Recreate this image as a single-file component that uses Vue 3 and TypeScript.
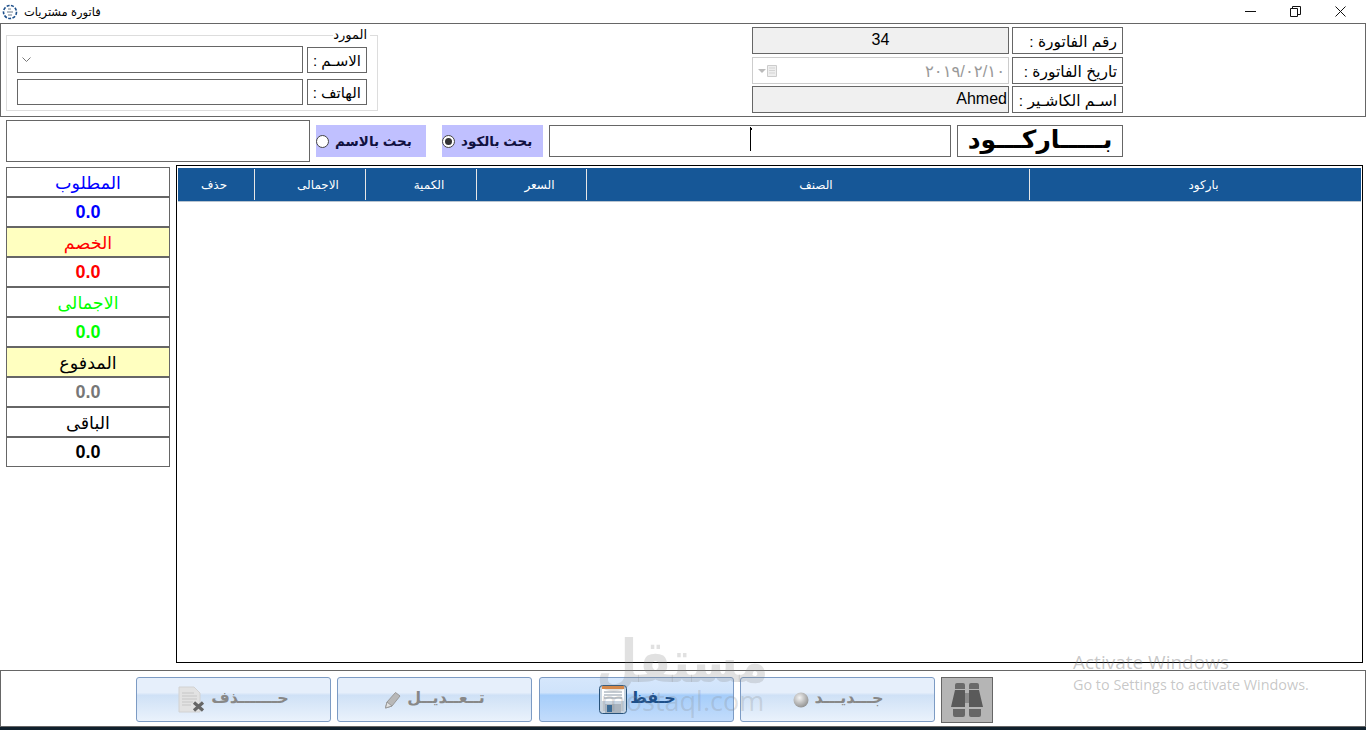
<template>
  <div class="window" dir="ltr">
    <header class="titlebar">
      <svg class="app-icon" width="16" height="16" viewBox="0 0 16 16">
        <circle cx="8" cy="8" r="6.5" fill="none" stroke="#1d4f8a" stroke-width="1.6" stroke-dasharray="3 1.4" />
        <path d="M6 5h3M5 8h6M6 11h4" stroke="#6b7a8c" stroke-width="1" fill="none" />
      </svg>
      <span class="app-title">فاتورة مشتريات</span>
      <div class="win-buttons">
        <svg width="11" height="11" viewBox="0 0 11 11"><path d="M0 5.500h11" stroke="#111" /></svg>
        <svg width="11" height="11" viewBox="0 0 11 11"><path d="M.5 2.500h7v8h-7zM2.500 2.500v-2h8v8h-3" fill="none" stroke="#111" /></svg>
        <svg width="11" height="11" viewBox="0 0 11 11"><path d="M.5.500l10 10M10.500.500l-10 10" fill="none" stroke="#111" /></svg>
      </div>
    </header>

    <section class="top-frame">
      <fieldset class="supplier">
        <legend>المورد</legend>
        <div class="sup-row">
          <div class="box sup-input combo">
            <svg width="9" height="6" viewBox="0 0 9 6"><path d="M.5.500l4 4 4-4" fill="none" stroke="#777" /></svg>
          </div>
          <div class="box sup-label">الاسـم :</div>
        </div>
        <div class="sup-row short">
          <div class="box sup-input"></div>
          <div class="box sup-label">الهاتف :</div>
        </div>
      </fieldset>

      <div class="invoice">
        <div class="inv-row">
          <div class="box inv-value readonly center">34</div>
          <div class="box inv-label">رقم الفاتورة :</div>
        </div>
        <div class="inv-row">
          <div class="box inv-value date">
            <span class="date-btn">
              <i class="tri"></i>
              <svg width="10" height="13" viewBox="0 0 10 13"><path d="M.5 1.500h9v11h-9z" fill="#eee" stroke="#ccc" /><path d="M2 4h6M2 6.500h6M2 9h6" stroke="#d4d4d4" /></svg>
            </span>
            <span class="date-text">٢٠١٩/٠٢/١٠</span>
          </div>
          <div class="box inv-label">تاريخ الفاتورة :</div>
        </div>
        <div class="inv-row">
          <div class="box inv-value readonly end">Ahmed</div>
          <div class="box inv-label">اسـم الكاشـير :</div>
        </div>
      </div>
    </section>

    <section class="search-row">
      <div class="box result-box"></div>
      <label class="radio-tag by-name"><i class="radio"></i><span>بحث بالاسم</span></label>
      <label class="radio-tag by-code"><i class="radio on"></i><span>بحث بالكود</span></label>
      <div class="box search-input"><i class="caret"></i></div>
      <div class="box barcode-label">بـــــاركـــود</div>
    </section>

    <main class="content">
      <aside class="totals">
        <div
          v-for="(c, i) in cells"
          :key="i"
          class="cell"
          :class="{ yellow: c.yellow, num: c.num }"
          :style="{ color: c.color }"
        >{{ c.text }}</div>
      </aside>
      <div class="grid-frame">
        <div class="grid-head">
          <div v-for="h in headers" :key="h" class="head-cell">{{ h }}</div>
        </div>
      </div>
    </main>

    <footer class="actions">
      <button class="act">
        <svg width="28" height="28" viewBox="0 0 28 28">
          <path d="M1 1h15l6 6v19H1z" fill="#e2e2e2" stroke="#d2d2d2" />
          <path d="M4 7h12M4 10h15M4 13h15M4 16h11M4 19h9" stroke="#c6c6c6" />
          <path d="M16 16.500l9 8M25 16.500l-9 8" stroke="#666" stroke-width="3.200" />
        </svg>
        <span>حـــــــذف</span>
      </button>
      <button class="act">
        <svg width="18" height="20" viewBox="0 0 18 20">
          <path d="M1.500 18l1.500-6L11.500 2.500l4.500 3.500-8 10z" fill="#b8b8b8" stroke="#999" />
          <path d="M1.500 18l1.500-6 5 4z" fill="#e2e2e2" stroke="#999" />
        </svg>
        <span>تــعــديــل</span>
      </button>
      <button class="act hot">
        <svg width="28" height="29" viewBox="0 0 28 29">
          <rect x=".5" y=".5" width="27" height="28" rx="3" fill="#c8d4e0" stroke="#27527a" />
          <rect x="3" y="1" width="22" height="15" fill="#fff" />
          <rect x="3" y="1" width="22" height="3" fill="#ee8a3a" />
          <path d="M5 7h18M5 10h18M5 13h18" stroke="#8a97a5" />
          <rect x="6" y="19" width="16" height="9" fill="#aab4be" />
          <rect x="8" y="20" width="5" height="7" fill="#3a6b96" />
        </svg>
        <span>حـفظ</span>
      </button>
      <button class="act">
        <svg width="18" height="18" viewBox="0 0 18 18">
          <defs>
            <radialGradient id="ball" cx=".4" cy=".35" r=".7">
              <stop offset="0" stop-color="#f4f4f4" />
              <stop offset="1" stop-color="#8c8c8c" />
            </radialGradient>
          </defs>
          <circle cx="9" cy="9" r="7.500" fill="url(#ball)" />
        </svg>
        <span>جـــديـــد</span>
      </button>
      <div class="finder">
        <svg width="32" height="34" viewBox="0 0 32 34">
          <path d="M6 0h6a2 2 0 0 1 2 2v4H4V2a2 2 0 0 1 2-2zM20 0h6a2 2 0 0 1 2 2v4H18V2a2 2 0 0 1 2-2z" fill="#6a6a6a" />
          <path d="M4 7h10v17H0zM18 7h10l4 17H18z" fill="#5a5a5a" />
          <path d="M2 26h12v6a2 2 0 0 1-2 2H4a2 2 0 0 1-2-2zM18 26h12v6a2 2 0 0 1-2 2h-8a2 2 0 0 1-2-2z" fill="#666" />
          <path d="M14 10h4v10h-4z" fill="#8c8c8c" />
        </svg>
      </div>
    </footer>
    <div class="taskbar"></div>

    <div class="watermark">
      <span class="wm-ar">مستقل</span>
      <span class="wm-en">mostaql.com</span>
    </div>
    <div class="activate">
      <div class="act-1">Activate Windows</div>
      <div class="act-2">Go to Settings to activate Windows.</div>
    </div>
  </div>
</template>

<script setup lang="ts">
interface Cell {
  text: string;
  color: string;
  yellow?: boolean;
  num?: boolean;
}

const cells: Cell[] = [
  { text: 'المطلوب', color: '#0000ff' },
  { text: '0.0', color: '#0000ff', num: true },
  { text: 'الخصم', color: '#ff0000', yellow: true },
  { text: '0.0', color: '#ff0000', num: true },
  { text: 'الاجمالى', color: '#00ff00' },
  { text: '0.0', color: '#00ff00', num: true },
  { text: 'المدفوع', color: '#000', yellow: true },
  { text: '0.0', color: '#777', num: true },
  { text: 'الباقى', color: '#000' },
  { text: '0.0', color: '#000', num: true }
];

const headers = ['حذف', 'الاجمالى', 'الكمية', 'السعر', 'الصنف', 'باركود'];
</script>

<style>
html,
body {
  margin: 0;
  background: #fff;
  overflow: hidden;
}
</style>

<style scoped>
.window {
  position: relative;
  width: 1366px;
  height: 730px;
  display: flex;
  flex-direction: column;
  background: #fff;
  font-family: "Liberation Sans", "DejaVu Sans", sans-serif;
  color: #000;
  overflow: hidden;
}
.box {
  box-sizing: border-box;
  border: 1px solid #666;
  background: #fff;
}

/* title bar */
.titlebar {
  height: 23px;
  flex: none;
  display: flex;
  align-items: center;
  padding-left: 2px;
}
.app-icon {
  margin-right: 6px;
}
.app-title {
  font-size: 11.500px;
}
.win-buttons {
  margin-left: auto;
  display: flex;
  gap: 34px;
  padding-right: 20px;
}

/* invoice + supplier */
.top-frame {
  box-sizing: border-box;
  height: 94px;
  flex: none;
  border: 1px solid #666;
  display: flex;
  justify-content: space-between;
  padding: 3px 242px 0 5px;
}
.supplier {
  box-sizing: border-box;
  width: 372px;
  height: 84px;
  margin: 0;
  padding: 0 10px;
  border: 1px solid #ddd;
}
.supplier legend {
  margin-left: auto;
  margin-right: -3px;
  padding: 0 3px 0 0;
  font-size: 13px;
  line-height: 16px;
}
.sup-row {
  display: flex;
  gap: 4px;
  height: 27px;
  margin-top: 3px;
  margin-bottom: 6px;
  align-items: flex-end;
}
.sup-row.short {
  height: 26px;
  margin-top: 0;
  margin-bottom: 0;
}
.sup-input {
  width: 286px;
  height: 100%;
}
.combo {
  display: flex;
  align-items: center;
  padding-left: 4px;
}
.sup-label {
  width: 60px;
  height: 26px;
  direction: rtl;
  font-size: 15px;
  line-height: 25px;
  padding-right: 5px;
}
.invoice {
  display: flex;
  flex-direction: column;
  gap: 2px;
}
.inv-row {
  display: flex;
  gap: 3px;
  height: 27px;
}
.inv-row:first-child {
  margin-bottom: 1px;
}
.inv-value {
  width: 257px;
  font-size: 16px;
  line-height: 24px;
}
.readonly {
  background: #f0f0f0;
}
.center {
  text-align: center;
}
.end {
  text-align: right;
  padding-right: 1px;
}
.date {
  display: flex;
  justify-content: space-between;
  align-items: center;
  border-color: #ccc;
  color: #999;
  padding: 0 3px 0 5px;
}
.date-btn {
  display: flex;
  align-items: center;
  gap: 1px;
}
.tri {
  width: 0;
  height: 0;
  border: 4px solid transparent;
  border-top-color: #bbb;
  border-bottom: 0;
}
.date-text {
  font-size: 16.500px;
}
.inv-label {
  width: 111px;
  direction: rtl;
  font-size: 15.500px;
  line-height: 27px;
  padding-right: 5px;
}

/* search */
.search-row {
  height: 42px;
  flex: none;
  margin-top: 3px;
  display: flex;
  align-items: center;
  padding-left: 6px;
}
.result-box {
  width: 304px;
  height: 42px;
  margin-right: 6px;
}
.radio-tag {
  height: 32px;
  box-sizing: border-box;
  background: #c0c0ff;
  display: flex;
  align-items: center;
  font-size: 13.500px;
  font-weight: 700;
  color: #101040;
  gap: 6px;
}
.by-name {
  width: 110px;
  margin-right: 16px;
}
.by-code {
  width: 101px;
  margin-right: 6px;
}
.radio {
  box-sizing: border-box;
  width: 13px;
  height: 13px;
  border-radius: 50%;
  border: 1px solid #444;
  background: #fff;
  position: relative;
}
.radio.on::after {
  content: "";
  position: absolute;
  inset: 2px;
  border-radius: 50%;
  background: #333;
}
.search-input {
  width: 402px;
  height: 32px;
  margin-right: 6px;
  position: relative;
}
.caret {
  position: absolute;
  left: 200px;
  top: 1px;
  width: 1px;
  height: 24px;
  background: #000;
}
.caret::before {
  content: "";
  position: absolute;
  left: 1px;
  top: 1px;
  width: 1px;
  height: 2px;
  background: #000;
}
.barcode-label {
  width: 166px;
  height: 32px;
  direction: rtl;
  text-align: center;
  font-size: 25px;
  font-weight: 700;
  line-height: 26px;
}

/* totals + grid */
.content {
  flex: none;
  height: 498px;
  margin-top: 3px;
  display: flex;
  gap: 6px;
  padding-left: 6px;
}
.totals {
  box-sizing: border-box;
  width: 164px;
  height: 300px;
  margin-top: 2px;
  border: 1px solid #666;
  display: flex;
  flex-direction: column;
}
.cell {
  box-sizing: border-box;
  height: 30px;
  flex: none;
  border-bottom: 2px solid #666;
  text-align: center;
  direction: rtl;
  font-size: 17.500px;
  line-height: 31px;
}
.cell:last-child {
  border-bottom: 0;
}
.cell.yellow {
  background: #ffffc0;
}
.cell.num {
  font-size: 18px;
  font-weight: 700;
  line-height: 28px;
}
.grid-frame {
  box-sizing: border-box;
  width: 1187px;
  border: 1px solid #000;
  padding: 2px 1px 0;
}
.grid-head {
  display: grid;
  grid-template-columns: 76px 111px 111px 110px 443px 332px;
  height: 33px;
  background: #165797;
  border-bottom: 1px solid #b8c4d0;
}
.head-cell {
  color: #fff;
  font-size: 12px;
  line-height: 35px;
  height: 33px;
  text-align: center;
  direction: rtl;
  position: relative;
}
.head-cell + .head-cell {
  padding-left: 17px;
}
.head-cell:first-child {
  padding-right: 4px;
}
.head-cell + .head-cell::before {
  content: "";
  position: absolute;
  left: 0;
  top: 1px;
  bottom: 1px;
  width: 1px;
  background: #e6e6e6;
}

/* bottom buttons */
.actions {
  box-sizing: border-box;
  height: 57px;
  flex: none;
  margin-top: 7px;
  border: 1px solid #666;
  display: flex;
  align-items: flex-start;
  padding: 6px 0 0 135px;
  gap: 6px;
}
.act {
  box-sizing: border-box;
  width: 195px;
  height: 45px;
  margin: 0;
  padding: 0;
  border: 1px solid #7c9bc4;
  border-radius: 3px;
  background: linear-gradient(#e6effb 0, #e6effb 34%, #cfe1f6 40%, #eaf2fc 100%);
  display: flex;
  align-items: center;
  justify-content: center;
  gap: 5px;
  font-family: "DejaVu Sans", sans-serif;
  font-size: 16px;
  font-weight: 700;
  color: #888;
}
.act span {
  margin-top: -4px;
}
.act.hot {
  margin-left: 1px;
  padding-left: 2px;
  gap: 3px;
  background: linear-gradient(#d6e7fc 0, #cfe3fb 34%, #a5cdfa 40%, #c3dcfb 100%);
  color: #1d4f8a;
}
.finder {
  box-sizing: border-box;
  width: 52px;
  height: 46px;
  border: 1px solid #666;
  background: #b5b5b5;
  display: flex;
  align-items: center;
  justify-content: center;
}
.taskbar {
  flex: 1;
  background: #10202c;
}

/* things that sit on top of the form */
.watermark {
  position: absolute;
  left: 590px;
  top: 636px;
  width: 185px;
  text-align: center;
  color: rgba(130, 130, 130, 0.24);
  pointer-events: none;
}
.wm-ar {
  display: block;
  font-family: "DejaVu Sans", sans-serif;
  font-size: 47px;
  font-weight: 700;
  line-height: 52px;
  direction: rtl;
  transform: scaleY(1.25);
}
.wm-en {
  display: block;
  font-family: "Open Sans", sans-serif;
  font-size: 27px;
  line-height: 26px;
}
.activate {
  position: absolute;
  left: 1073px;
  top: 650px;
  font-family: "Open Sans", sans-serif;
  color: rgba(120, 120, 120, 0.42);
  pointer-events: none;
}
.act-1 {
  font-size: 19px;
  line-height: 24px;
}
.act-2 {
  font-size: 14.400px;
  line-height: 22px;
}
</style>
